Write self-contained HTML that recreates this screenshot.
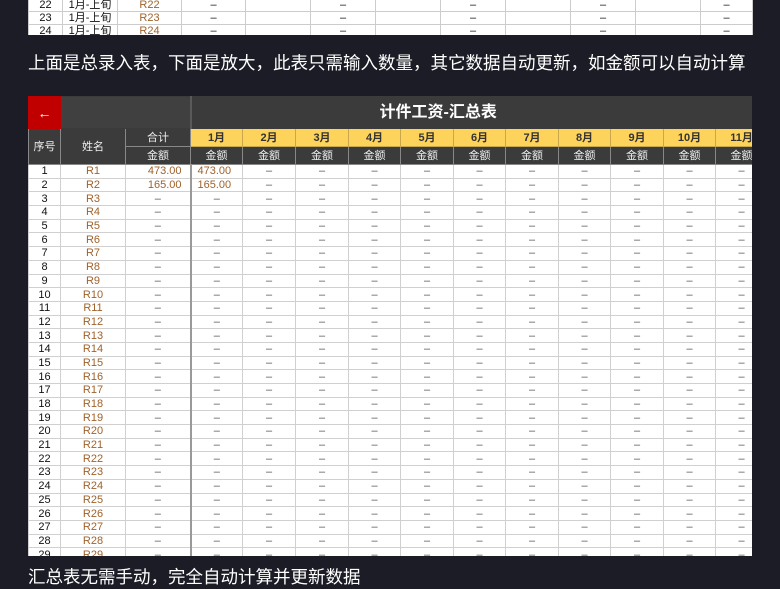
<!DOCTYPE html>
<html><head><meta charset="utf-8"><style>
body{margin:0;width:780px;height:585px;background:#1b1c25;overflow:hidden;position:relative;font-family:"Liberation Sans","Noto Sans CJK SC",sans-serif}
table{border-collapse:collapse;table-layout:fixed;position:absolute}
td{padding:0;text-align:center;white-space:nowrap;overflow:hidden}
#top{left:28px;top:-2px;background:#fff;font-size:11px;color:#111}
#top td{height:12px;border:1px solid #ccc;line-height:12px}
#top .n{color:#a0612a}
.t{position:absolute;left:28px;color:#fff;font-size:17.5px;white-space:nowrap}
#main{left:0;top:0;width:724px;font-size:11px;background:#fff}
#main td{border:1px solid #d0d0d0;height:12.7px;line-height:12px;color:#555}
#main td:first-child{color:#111}
#main .h td{background:#3b3b3b;color:#eee;border-color:#888}
#main td.y{background:#fdd35b;color:#333;font-weight:bold;border-color:#c9a84a}
#main td.b{color:#a0612a}
#main td.s{border-left:2px solid #999}
</style></head><body>
<table id="top" style="width:724px"><colgroup><col style="width:34px"><col style="width:55px"><col style="width:64px"><col style="width:64px"><col style="width:65px"><col style="width:65px"><col style="width:65px"><col style="width:65px"><col style="width:65px"><col style="width:65px"><col style="width:65px"><col style="width:52px"></colgroup>
<tr><td>22</td><td>1月-上旬</td><td class="n">R22</td><td>–</td><td></td><td>–</td><td></td><td>–</td><td></td><td>–</td><td></td><td>–</td></tr>
<tr><td>23</td><td>1月-上旬</td><td class="n">R23</td><td>–</td><td></td><td>–</td><td></td><td>–</td><td></td><td>–</td><td></td><td>–</td></tr>
<tr><td>24</td><td>1月-上旬</td><td class="n">R24</td><td>–</td><td></td><td>–</td><td></td><td>–</td><td></td><td>–</td><td></td><td>–</td></tr>
</table>
<div style="position:absolute;left:0;top:35px;width:780px;height:60px;background:#1b1c25"></div>
<div class="t" style="top:50px">上面是总录入表，下面是放大，此表只需输入数量，其它数据自动更新，如金额可以自动计算</div>
<div style="position:absolute;left:28px;top:96px;width:724px;height:460px;overflow:hidden">
<table id="main"><colgroup><col style="width:32px"><col style="width:65px"><col style="width:65px"><col style="width:52px"><col style="width:53px"><col style="width:53px"><col style="width:52px"><col style="width:53px"><col style="width:52px"><col style="width:53px"><col style="width:52px"><col style="width:53px"><col style="width:52px"><col style="width:52px"></colgroup>
<tr class="h"><td style="background:#c00000;height:31px;color:#fff;font-size:14px;border-color:#c00000">←</td><td colspan="2" style="border-color:#3b3b3b;background:#404040"></td><td colspan="11" class="s" style="font-size:16px;font-weight:bold;text-align:left;padding-left:188px;color:#fff;border-color:#3b3b3b;border-left:2px solid #5a5a5a">计件工资-汇总表</td></tr>
<tr class="h"><td rowspan="2">序号</td><td rowspan="2">姓名</td><td style="height:17px">合计</td><td class="y">1月</td><td class="y">2月</td><td class="y">3月</td><td class="y">4月</td><td class="y">5月</td><td class="y">6月</td><td class="y">7月</td><td class="y">8月</td><td class="y">9月</td><td class="y">10月</td><td class="y">11月</td></tr>
<tr class="h"><td style="height:17px">金额</td><td>金额</td><td>金额</td><td>金额</td><td>金额</td><td>金额</td><td>金额</td><td>金额</td><td>金额</td><td>金额</td><td>金额</td><td>金额</td></tr>
<tr><td>1</td><td class="b">R1</td><td class="b" style="text-align:right;padding-right:8px">473.00</td><td class="b s" style="text-align:left;padding-left:6px">473.00</td><td>–</td><td>–</td><td>–</td><td>–</td><td>–</td><td>–</td><td>–</td><td>–</td><td>–</td><td>–</td></tr>
<tr><td>2</td><td class="b">R2</td><td class="b" style="text-align:right;padding-right:8px">165.00</td><td class="b s" style="text-align:left;padding-left:6px">165.00</td><td>–</td><td>–</td><td>–</td><td>–</td><td>–</td><td>–</td><td>–</td><td>–</td><td>–</td><td>–</td></tr>
<tr><td>3</td><td class="b">R3</td><td>–</td><td class="s">–</td><td>–</td><td>–</td><td>–</td><td>–</td><td>–</td><td>–</td><td>–</td><td>–</td><td>–</td><td>–</td></tr>
<tr><td>4</td><td class="b">R4</td><td>–</td><td class="s">–</td><td>–</td><td>–</td><td>–</td><td>–</td><td>–</td><td>–</td><td>–</td><td>–</td><td>–</td><td>–</td></tr>
<tr><td>5</td><td class="b">R5</td><td>–</td><td class="s">–</td><td>–</td><td>–</td><td>–</td><td>–</td><td>–</td><td>–</td><td>–</td><td>–</td><td>–</td><td>–</td></tr>
<tr><td>6</td><td class="b">R6</td><td>–</td><td class="s">–</td><td>–</td><td>–</td><td>–</td><td>–</td><td>–</td><td>–</td><td>–</td><td>–</td><td>–</td><td>–</td></tr>
<tr><td>7</td><td class="b">R7</td><td>–</td><td class="s">–</td><td>–</td><td>–</td><td>–</td><td>–</td><td>–</td><td>–</td><td>–</td><td>–</td><td>–</td><td>–</td></tr>
<tr><td>8</td><td class="b">R8</td><td>–</td><td class="s">–</td><td>–</td><td>–</td><td>–</td><td>–</td><td>–</td><td>–</td><td>–</td><td>–</td><td>–</td><td>–</td></tr>
<tr><td>9</td><td class="b">R9</td><td>–</td><td class="s">–</td><td>–</td><td>–</td><td>–</td><td>–</td><td>–</td><td>–</td><td>–</td><td>–</td><td>–</td><td>–</td></tr>
<tr><td>10</td><td class="b">R10</td><td>–</td><td class="s">–</td><td>–</td><td>–</td><td>–</td><td>–</td><td>–</td><td>–</td><td>–</td><td>–</td><td>–</td><td>–</td></tr>
<tr><td>11</td><td class="b">R11</td><td>–</td><td class="s">–</td><td>–</td><td>–</td><td>–</td><td>–</td><td>–</td><td>–</td><td>–</td><td>–</td><td>–</td><td>–</td></tr>
<tr><td>12</td><td class="b">R12</td><td>–</td><td class="s">–</td><td>–</td><td>–</td><td>–</td><td>–</td><td>–</td><td>–</td><td>–</td><td>–</td><td>–</td><td>–</td></tr>
<tr><td>13</td><td class="b">R13</td><td>–</td><td class="s">–</td><td>–</td><td>–</td><td>–</td><td>–</td><td>–</td><td>–</td><td>–</td><td>–</td><td>–</td><td>–</td></tr>
<tr><td>14</td><td class="b">R14</td><td>–</td><td class="s">–</td><td>–</td><td>–</td><td>–</td><td>–</td><td>–</td><td>–</td><td>–</td><td>–</td><td>–</td><td>–</td></tr>
<tr><td>15</td><td class="b">R15</td><td>–</td><td class="s">–</td><td>–</td><td>–</td><td>–</td><td>–</td><td>–</td><td>–</td><td>–</td><td>–</td><td>–</td><td>–</td></tr>
<tr><td>16</td><td class="b">R16</td><td>–</td><td class="s">–</td><td>–</td><td>–</td><td>–</td><td>–</td><td>–</td><td>–</td><td>–</td><td>–</td><td>–</td><td>–</td></tr>
<tr><td>17</td><td class="b">R17</td><td>–</td><td class="s">–</td><td>–</td><td>–</td><td>–</td><td>–</td><td>–</td><td>–</td><td>–</td><td>–</td><td>–</td><td>–</td></tr>
<tr><td>18</td><td class="b">R18</td><td>–</td><td class="s">–</td><td>–</td><td>–</td><td>–</td><td>–</td><td>–</td><td>–</td><td>–</td><td>–</td><td>–</td><td>–</td></tr>
<tr><td>19</td><td class="b">R19</td><td>–</td><td class="s">–</td><td>–</td><td>–</td><td>–</td><td>–</td><td>–</td><td>–</td><td>–</td><td>–</td><td>–</td><td>–</td></tr>
<tr><td>20</td><td class="b">R20</td><td>–</td><td class="s">–</td><td>–</td><td>–</td><td>–</td><td>–</td><td>–</td><td>–</td><td>–</td><td>–</td><td>–</td><td>–</td></tr>
<tr><td>21</td><td class="b">R21</td><td>–</td><td class="s">–</td><td>–</td><td>–</td><td>–</td><td>–</td><td>–</td><td>–</td><td>–</td><td>–</td><td>–</td><td>–</td></tr>
<tr><td>22</td><td class="b">R22</td><td>–</td><td class="s">–</td><td>–</td><td>–</td><td>–</td><td>–</td><td>–</td><td>–</td><td>–</td><td>–</td><td>–</td><td>–</td></tr>
<tr><td>23</td><td class="b">R23</td><td>–</td><td class="s">–</td><td>–</td><td>–</td><td>–</td><td>–</td><td>–</td><td>–</td><td>–</td><td>–</td><td>–</td><td>–</td></tr>
<tr><td>24</td><td class="b">R24</td><td>–</td><td class="s">–</td><td>–</td><td>–</td><td>–</td><td>–</td><td>–</td><td>–</td><td>–</td><td>–</td><td>–</td><td>–</td></tr>
<tr><td>25</td><td class="b">R25</td><td>–</td><td class="s">–</td><td>–</td><td>–</td><td>–</td><td>–</td><td>–</td><td>–</td><td>–</td><td>–</td><td>–</td><td>–</td></tr>
<tr><td>26</td><td class="b">R26</td><td>–</td><td class="s">–</td><td>–</td><td>–</td><td>–</td><td>–</td><td>–</td><td>–</td><td>–</td><td>–</td><td>–</td><td>–</td></tr>
<tr><td>27</td><td class="b">R27</td><td>–</td><td class="s">–</td><td>–</td><td>–</td><td>–</td><td>–</td><td>–</td><td>–</td><td>–</td><td>–</td><td>–</td><td>–</td></tr>
<tr><td>28</td><td class="b">R28</td><td>–</td><td class="s">–</td><td>–</td><td>–</td><td>–</td><td>–</td><td>–</td><td>–</td><td>–</td><td>–</td><td>–</td><td>–</td></tr>
<tr><td>29</td><td class="b">R29</td><td>–</td><td class="s">–</td><td>–</td><td>–</td><td>–</td><td>–</td><td>–</td><td>–</td><td>–</td><td>–</td><td>–</td><td>–</td></tr>
</table></div>
<div class="t" style="top:564px">汇总表无需手动，完全自动计算并更新数据</div>
</body></html>
